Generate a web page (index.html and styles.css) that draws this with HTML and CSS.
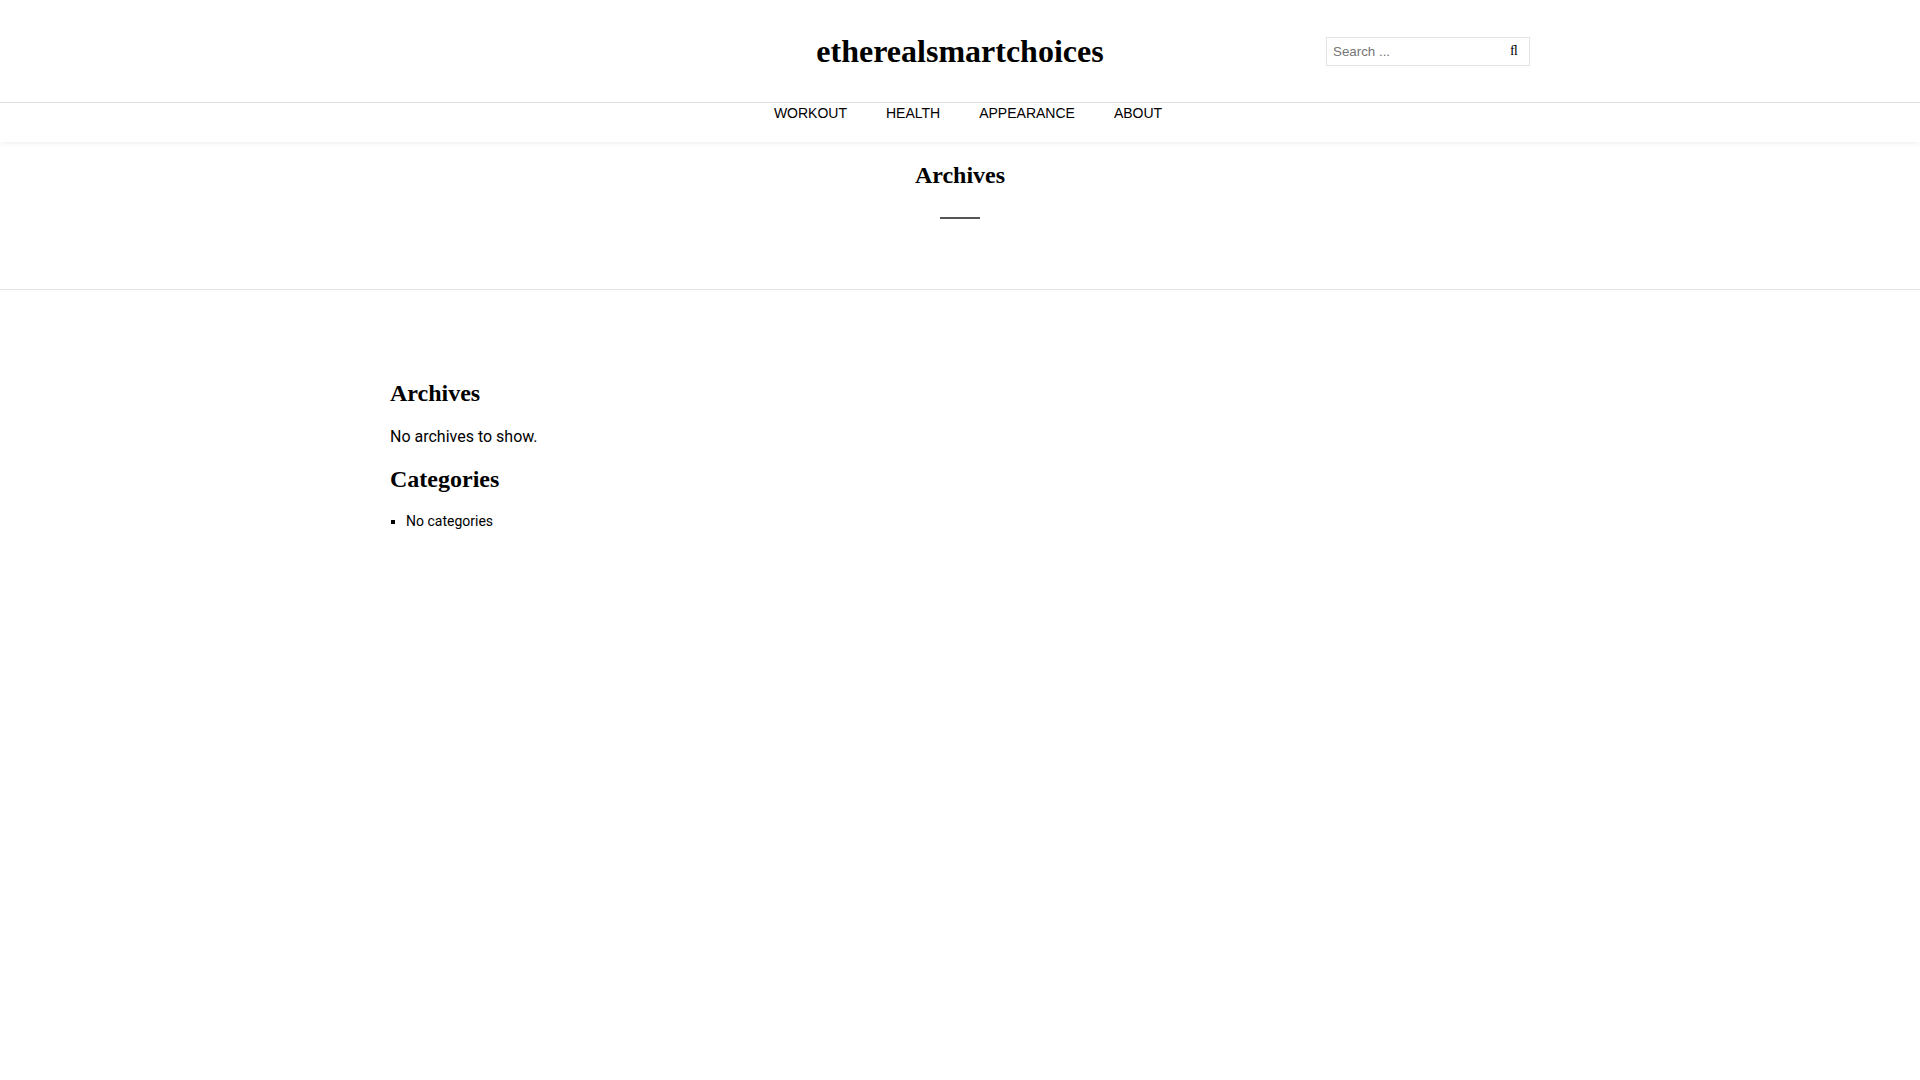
FILE: index.html
```
<!DOCTYPE html>
<html lang="en">
<head>
  <meta charset="UTF-8">
  <meta name="viewport" content="width=device-width, initial-scale=1">
  <title>Archives - etherealsmartchoices</title>
  <link rel="stylesheet" href="styles.css">
</head>
<body>

  <header class="site-header">
    <div class="container header-row">
      <a href="#" class="site-title">etherealsmartchoices</a>
      <form class="search-form">
        <input type="search" class="search-field" placeholder="Search ..." aria-label="Search">
        <button type="submit" class="search-submit" aria-label="Submit search">&#xFB02;</button>
      </form>
    </div>
    <nav class="main-nav">
      <ul class="menu">
        <li><a href="#">Workout</a></li>
        <li><a href="#">Health</a></li>
        <li><a href="#">Appearance</a></li>
        <li><a href="#">About</a></li>
      </ul>
    </nav>
  </header>

  <div class="page-header">
    <h1>Archives</h1>
  </div>

  <main class="container content">
    <section class="widget">
      <h2>Archives</h2>
      <p>No archives to show.</p>
    </section>
    <section class="widget">
      <h2>Categories</h2>
      <ul class="category-list">
        <li>No categories</li>
      </ul>
    </section>
  </main>

</body>
</html>
```
FILE: styles.css
```
* {
  box-sizing: border-box;
}
body {
  margin: 0;
  font-family: Roboto, sans-serif;
  font-size: 16px;
  line-height: 24px;
  color: #000;
  background: #fff;
}
a {
  color: inherit;
  text-decoration: none;
}
h1, h2 {
  margin: 0;
  font-family: "Liberation Serif", serif;
  font-size: 24px;
  font-weight: bold;
  line-height: 36px;
}
.container {
  max-width: 1170px;
  margin: 0 auto;
  padding: 0 15px;
}

/* header */
.site-header {
  background: #fff;
  box-shadow: 0 0 6px rgba(0,0,0,0.1);
}
.header-row {
  display: grid;
  grid-template-columns: 1fr auto 1fr;
  align-items: center;
  padding-top: 30px;
  padding-bottom: 30px;
}
.site-title {
  grid-column: 2;
  font-family: "Liberation Serif", serif;
  font-size: 32px;
  font-weight: bold;
  line-height: 42px;
}
.search-form {
  display: flex;
  justify-self: end;
  width: 204px;
  height: 29px;
  border: 1px solid #e4e4e4;
}
.search-field {
  flex: 1;
  min-width: 0;
  padding: 0 6px;
  border: none;
  background: none;
  font-family: "Liberation Sans", sans-serif;
  color: #000;
}
.search-field::placeholder {
  color: #757575;
}
.search-submit {
  width: 30px;
  padding: 0;
  border: none;
  background: none;
  font-family: "Liberation Serif", serif;
  font-size: 14px;
  color: #000;
  cursor: pointer;
}

.main-nav {
  border-top: 1px solid #e1e1e1;
}
.menu {
  display: flex;
  justify-content: center;
  gap: 39px;
  margin: 0;
  padding: 0 0 18px 16px;
  list-style: none;
  font-family: "Liberation Sans", sans-serif;
  font-size: 14px;
  line-height: 21px;
  text-transform: uppercase;
}

/* page title */
.page-header {
  padding: 15px 0 70px;
  border-bottom: 1px solid #e4e4e4;
  text-align: center;
}
.page-header h1::after {
  content: "";
  display: block;
  width: 40px;
  height: 2px;
  margin: 24px auto 0;
  background: #555;
}

/* widgets */
.content {
  padding-top: 85px;
  padding-bottom: 60px;
}
.widget {
  margin-bottom: 12px;
}
.widget p {
  margin: 14px 0 0;
}
.category-list {
  margin: 12px 0 0;
  padding-left: 16px;
  list-style: square;
  font-size: 14px;
}
```
